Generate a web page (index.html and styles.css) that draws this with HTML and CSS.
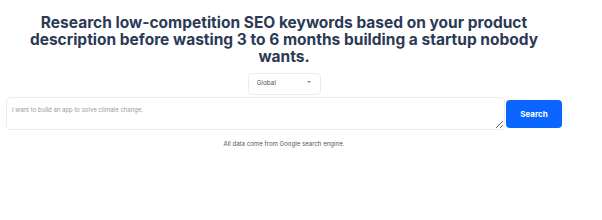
FILE: index.html
```html
<!DOCTYPE html>
<html lang="en">
<head>
  <meta charset="UTF-8" />
  <meta name="viewport" content="width=device-width, initial-scale=1.0"/>
  <title>Keyword Research</title>
  <link rel="stylesheet" href="styles.css">
</head>
<body>
  <main class="page">
    <h1 class="title">Research low-competition SEO keywords based on your product description before wasting 3 to 6 months building a startup nobody wants.</h1>

    <div class="region">
      <select class="region-select">
        <option>Global</option>
        <option>United States</option>
        <option>United Kingdom</option>
      </select>
      <span class="caret"></span>
    </div>

    <form class="search-row" onsubmit="return false">
      <textarea class="query" placeholder="I want to build an app to solve climate change."></textarea>
      <button class="search-btn" type="submit">Search</button>
    </form>

    <p class="note">All data come from Google search engine.</p>
  </main>
</body>
</html>
```

FILE: styles.css
```css
* {
  box-sizing: border-box;
  margin: 0;
  padding: 0;
  font-family: 'Inter', 'Liberation Sans', sans-serif;
}

body {
  background: #ffffff;
  width: 602px;
  height: 220px;
  overflow: hidden;
}

.page {
  width: 556px;
  margin-left: 6px;
  padding-top: 14px;
  display: flex;
  flex-direction: column;
  align-items: center;
}

.title {
  max-width: 540px;
  font-size: 15.5px;
  line-height: 17px;
  font-weight: 700;
  color: #2b3a55;
  text-align: center;
}

.region {
  position: relative;
  margin-top: 4px;
  width: 73px;
  height: 22px;
}

.region-select {
  appearance: none;
  -webkit-appearance: none;
  width: 100%;
  height: 100%;
  border: 1px solid #ececef;
  border-radius: 4px;
  background: #fff;
  padding-left: 8px;
  padding-bottom: 2px;
  font-size: 6.5px;
  color: #555;
  outline: none;
}

.caret {
  position: absolute;
  right: 10px;
  top: 12px;
  width: 0;
  height: 0;
  border-left: 2px solid transparent;
  border-right: 2px solid transparent;
  border-top: 2.5px solid #888;
  pointer-events: none;
}

.search-row {
  display: flex;
  align-items: center;
  gap: 1px;
  width: 100%;
  margin-top: 6px;
}

.query {
  flex: 1;
  height: 33px;
  border: 1px solid #ececef;
  border-radius: 4px;
  padding: 8px 5px;
  font-size: 6px;
  color: #333;
  resize: vertical;
  outline: none;
}

.query::placeholder {
  color: #9a9a9a;
}

.search-btn {
  width: 56px;
  height: 28px;
  background: #0b66ff;
  color: #fff;
  border: none;
  border-radius: 4px;
  font-size: 8px;
  font-weight: 700;
  cursor: pointer;
}

.note {
  margin-top: 10px;
  font-size: 6.1px;
  color: #555;
}
```
